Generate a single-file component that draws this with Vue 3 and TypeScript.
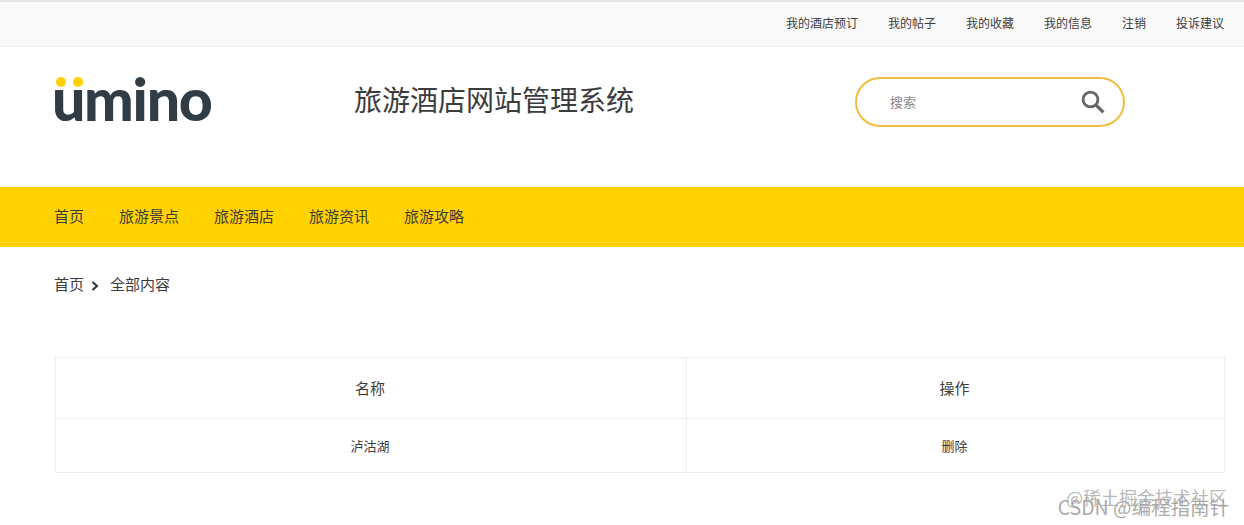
<script setup lang="ts">
const topLinks: string[] = ['我的酒店预订', '我的帖子', '我的收藏', '我的信息', '注销', '投诉建议']
const navLinks: string[] = ['首页', '旅游景点', '旅游酒店', '旅游资讯', '旅游攻略']
</script>

<template>
  <div class="page">
    <div class="topbar">
      <a v-for="l in topLinks" :key="l" class="toplink">{{ l }}</a>
    </div>
    <header class="header">
      <div class="logo">
        <span class="logo-text">umino</span>
        <span class="dot dot-a"></span>
        <span class="dot dot-b"></span>
      </div>
      <h1 class="title">旅游酒店网站管理系统</h1>
      <div class="search">
        <span class="placeholder">搜索</span>
        <svg class="search-icon" width="24" height="24" viewBox="0 0 24 24" fill="none" stroke="#666" stroke-width="2.8">
          <circle cx="9.5" cy="9.5" r="7.4" />
          <path d="M14.8 14.8 L22.4 22.4" stroke-width="3.2" />
        </svg>
      </div>
    </header>
    <nav class="nav">
      <a v-for="l in navLinks" :key="l" class="navlink">{{ l }}</a>
    </nav>
    <div class="crumb">
      <span>首页</span>
      <svg class="chev" width="8" height="10" viewBox="0 0 8 10" fill="none" stroke="#333" stroke-width="2">
        <path d="M1.5 1 L6 5 L1.5 9" />
      </svg>
      <span>全部内容</span>
    </div>
    <div class="table">
      <div class="cell head">名称</div>
      <div class="cell head">操作</div>
      <div class="cell body">泸沽湖</div>
      <div class="cell body">删除</div>
    </div>
    <div class="mark mark-a">@稀土掘金技术社区</div>
    <div class="mark mark-b">CSDN @编程指南针</div>
  </div>
</template>

<style>
html, body { margin: 0; background: #fff; overflow: hidden; }
</style>

<style scoped>
.page {
  position: relative;
  width: 1244px;
  height: 525px;
  overflow: hidden;
  font-family: "Noto Sans CJK SC", "Liberation Sans", sans-serif;
  color: #3c3c3c;
}
.topbar {
  box-sizing: border-box;
  height: 47px;
  display: flex;
  justify-content: flex-end;
  align-items: flex-start;
  gap: 30px;
  padding-right: 20px;
  background: #f9f9f9;
  border-top: 2px solid #e4e4e4;
  border-bottom: 1px solid #eeeeee;
  font-size: 12px;
}
.toplink { line-height: 42px; }
.header {
  height: 140px;
  display: flex;
  align-items: flex-start;
  padding-left: 55px;
}
.logo {
  position: relative;
  width: 299px;
  height: 80px;
  flex: none;
}
.logo-text {
  position: absolute;
  left: -3px;
  top: 12px;
  font-family: "Lato", sans-serif;
  font-weight: 900;
  font-size: 59px;
  line-height: 80px;
  letter-spacing: -1.3px;
  color: #303c46;
}
.dot {
  position: absolute;
  top: 30px;
  width: 10px;
  height: 10px;
  border-radius: 50%;
  background: #ffd200;
}
.dot-a { left: 1px; }
.dot-b { left: 18px; }
.title {
  margin: 32px 0 0;
  width: 501px;
  font-size: 28px;
  line-height: 40px;
  font-weight: 400;
  color: #3c3c3c;
}
.search {
  box-sizing: border-box;
  margin-top: 30px;
  width: 270px;
  height: 50px;
  border: 2px solid #f2bc42;
  border-radius: 25px;
  display: flex;
  align-items: center;
  justify-content: space-between;
  padding: 0 8px 0 33px;
}
.placeholder { font-size: 13px; color: #888; margin-top: -2px; }
.search-icon { margin-right: 10px; }
.nav {
  box-sizing: border-box;
  height: 60px;
  background: #ffd200;
  display: flex;
  align-items: center;
  gap: 35px;
  padding: 0 0 3px 54px;
  font-size: 15px;
}
.crumb {
  box-sizing: border-box;
  display: flex;
  align-items: center;
  height: 76px;
  padding: 0 0 3px 54px;
  font-size: 15px;
}
.chev { margin: 5px 11px 0 7px; }
.table {
  box-sizing: border-box;
  margin: 34px 0 0 55px;
  width: 1170px;
  display: grid;
  grid-template-columns: 631px 1fr;
  grid-template-rows: 61px 54px;
  border: 1px solid #eeeeee;
  border-bottom: none;
  border-right: none;
}
.cell {
  display: flex;
  align-items: center;
  justify-content: center;
  border-right: 1px solid #eeeeee;
  border-bottom: 1px solid #eeeeee;
  padding-right: 2px;
}
.head { font-size: 15px; padding-bottom: 2px; }
.body { font-size: 13px; padding-bottom: 1px; }
.mark {
  position: absolute;
  white-space: nowrap;
  pointer-events: none;
}
.mark-a {
  right: 17px;
  top: 484px;
  font-size: 18px;
  color: rgba(120, 120, 120, 0.55);
  text-shadow: 0 0 1px rgba(255, 255, 255, 0.8);
}
.mark-b {
  right: 15px;
  top: 492px;
  font-size: 19.5px;
  color: rgba(130, 130, 130, 0.7);
  text-shadow: 0 0 1px rgba(255, 255, 255, 0.8);
}
</style>
